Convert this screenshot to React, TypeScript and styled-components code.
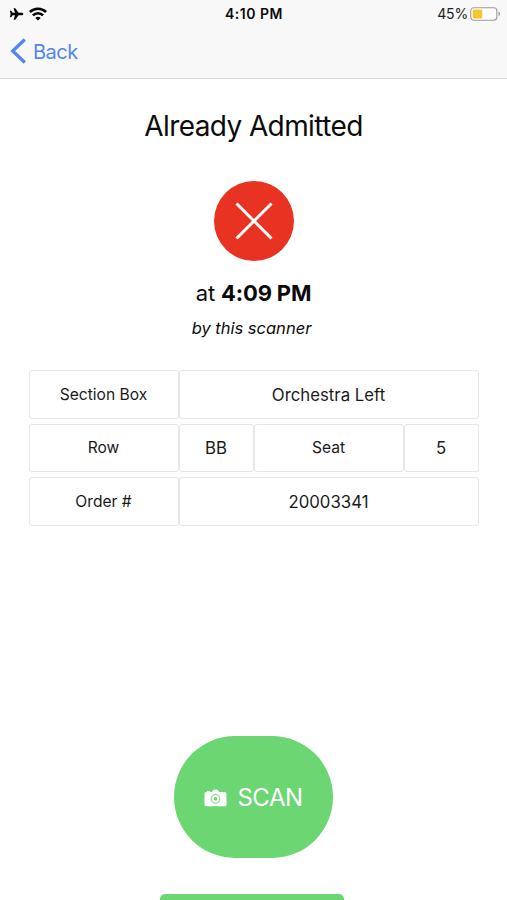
import React from "react";
import styled, { createGlobalStyle } from "styled-components";

const GlobalStyle = createGlobalStyle`
  * { box-sizing: border-box; }
  body {
    margin: 0;
    background: #fff;
    color: #0b0b0b;
    font-family: Inter, "Liberation Sans", sans-serif;
  }
`;

const Screen = styled.div`
  display: flex;
  flex-direction: column;
  width: 507px;
  height: 900px;
  overflow: hidden;
  background: #fff;
`;

const Header = styled.header`
  flex: none;
  height: 79px;
  background: #f8f8f8;
  border-bottom: 1px solid #d9d9d9;
`;

const StatusBar = styled.div`
  display: grid;
  grid-template-columns: 1fr auto 1fr;
  align-items: center;
  height: 27px;
  padding: 0 6px 0 7px;
`;

const StatusIcons = styled.div`
  display: flex;
  align-items: center;
  gap: 5px;
  padding-left: 2px;
`;

const Clock = styled.time`
  font-size: 14px;
  line-height: 27px;
  font-weight: 600;
  letter-spacing: 0.5px;
`;

const BatteryStatus = styled.div`
  display: flex;
  align-items: center;
  justify-content: flex-end;
  gap: 2px;
  font-size: 14px;
  letter-spacing: -0.15px;
  color: #222;
`;

const BackButton = styled.button`
  display: flex;
  align-items: center;
  gap: 6px;
  height: 48px;
  padding: 0 0 0 10px;
  border: 0;
  background: none;
  color: #5486f2;
  font-family: inherit;
  font-size: 20px;
  line-height: 26px;
  letter-spacing: -0.5px;
`;

const BackLabel = styled.span`
  padding-top: 1px;
`;

const Content = styled.main`
  display: flex;
  flex-direction: column;
  align-items: center;
  flex: 1;
  min-height: 0;
`;

const Title = styled.h1`
  margin: 29px 0 0;
  font-size: 28px;
  line-height: 36px;
  font-weight: 400;
  letter-spacing: -0.6px;
`;

const RejectedBadge = styled.div`
  display: flex;
  align-items: center;
  justify-content: center;
  flex: none;
  width: 80px;
  height: 80px;
  margin-top: 37px;
  border-radius: 50%;
  background: #e83323;
`;

const AdmittedTime = styled.p`
  margin: 18px 0 0;
  font-size: 22px;
  line-height: 28px;
  letter-spacing: -0.15px;

  strong { font-weight: 650; }
`;

const ScannerNote = styled.p`
  margin: 9px 0 0;
  padding-right: 4px;
  font-size: 16.5px;
  line-height: 24px;
  font-style: italic;
`;

const Details = styled.div`
  display: flex;
  flex-direction: column;
  flex: none;
  gap: 5px;
  width: 450px;
  margin-top: 30px;
`;

const DetailRow = styled.div`
  display: grid;
  grid-template-columns: 2fr 1fr 2fr 1fr;
  height: 48.7px;
`;

const Cell = styled.div<{ $span?: number; $label?: boolean }>`
  display: flex;
  align-items: center;
  justify-content: center;
  grid-column: span ${({ $span = 1 }) => $span};
  border: 1px solid #e5e7eb;
  border-radius: 3px;
  padding-top: ${({ $label }) => ($label ? 0.8 : 0.6)}px;
  font-size: ${({ $label }) => ($label ? 15.6 : 16.8)}px;
  line-height: 20px;
  color: #1a1a1a;
`;

const ScanButton = styled.button`
  display: flex;
  align-items: center;
  justify-content: center;
  flex: none;
  gap: 10px;
  width: 159px;
  height: 122px;
  margin-top: 210px;
  padding: 1px 0 0;
  border: 0;
  border-radius: 61px;
  background: #6bd672;
  color: #fff;
  font-family: inherit;
  font-size: 24px;
  font-weight: 400;
  letter-spacing: -0.5px;
`;

const BottomButton = styled.div`
  flex: none;
  width: 184px;
  height: 40px;
  margin: 36px 3px 0 0;
  border-radius: 5px;
  background: #6bd672;
`;

const PlaneIcon = () => (
  <svg width="15" height="14" viewBox="0 0 15 14" fill="#050505">
    <path d="M14.3 7c0 .8-.8 1.3-2 1.3H9.6L6.3 12.8H4.5L6 8.3H3.7L2.2 10.2H.9L1.6 7 .9 3.8h1.3l1.5 1.9H6L4.5 1.2h1.8l3.3 4.5h2.7c1.200 0 2 .5 2 1.300z" />
  </svg>
);

const WifiIcon = () => (
  <svg width="18" height="14" viewBox="0 0 18 14" fill="none" stroke="#050505" strokeWidth="2.6">
    <path d="M.9 5a11.6 11.6 0 0 1 16.2 0M3.9 8.4a7.200 7.200 0 0 1 10.200 0" />
    <path d="M6.3 11a3.9 3.9 0 0 1 5.4 0L9 13.600z" fill="#050505" stroke="none" />
  </svg>
);

const BatteryIcon = () => (
  <svg width="31" height="14" viewBox="0 0 31 14">
    <rect x=".8" y=".7" width="26" height="12.6" rx="3" fill="#fff" stroke="#9b9b9b" strokeWidth="1.1" />
    <rect x="2.7" y="2.5" width="9.5" height="9" rx="1" fill="#f2c832" />
    <path d="M28.5 4.6c2 .9 2 3.9 0 4.8z" fill="#9b9b9b" />
  </svg>
);

const BackIcon = () => (
  <svg width="17" height="26" viewBox="0 0 17 26" fill="none" stroke="currentColor" strokeWidth="3.3">
    <path d="M14.8 1.5 2.7 13l12.1 11.5" />
  </svg>
);

const CrossIcon = () => (
  <svg width="40" height="40" viewBox="0 0 40 40" fill="none" stroke="#fff" strokeWidth="3">
    <path d="m2.5 2.5 35 35m0-35-35 35" />
  </svg>
);

const CameraIcon = () => (
  <svg width="23" height="18" viewBox="0 0 23 18">
    <path
      d="M2 3h1V2h3v1h1.6l1.5-1.8Q9.6.5 10.5.5h2q.9 0 1.4.7L15.4 3H21q1.5 0 1.5 1.5v11.3q0 1.5-1.5 1.5H2Q.5 17.3.5 15.8V4.5Q.5 3 2 3z"
      fill="#fff"
    />
    <circle cx="11.5" cy="9.8" r="4.4" fill="none" stroke="#6bd672" strokeWidth="1" />
    <circle cx="11.5" cy="9.8" r="1.8" fill="#6bd672" />
  </svg>
);

export default function App() {
  return (
    <Screen>
      <GlobalStyle />
      <Header>
        <StatusBar>
          <StatusIcons>
            <PlaneIcon />
            <WifiIcon />
          </StatusIcons>
          <Clock>4:10 PM</Clock>
          <BatteryStatus>
            45%
            <BatteryIcon />
          </BatteryStatus>
        </StatusBar>
        <BackButton>
          <BackIcon />
          <BackLabel>Back</BackLabel>
        </BackButton>
      </Header>
      <Content>
        <Title>Already Admitted</Title>
        <RejectedBadge>
          <CrossIcon />
        </RejectedBadge>
        <AdmittedTime>
          at <strong>4:09 PM</strong>
        </AdmittedTime>
        <ScannerNote>by this scanner</ScannerNote>
        <Details>
          <DetailRow>
            <Cell $label>Section Box</Cell>
            <Cell $span={3}>Orchestra Left</Cell>
          </DetailRow>
          <DetailRow>
            <Cell $label>Row</Cell>
            <Cell>BB</Cell>
            <Cell $label>Seat</Cell>
            <Cell>5</Cell>
          </DetailRow>
          <DetailRow>
            <Cell $label>Order #</Cell>
            <Cell $span={3}>20003341</Cell>
          </DetailRow>
        </Details>
        <ScanButton>
          <CameraIcon />
          SCAN
        </ScanButton>
        <BottomButton />
      </Content>
    </Screen>
  );
}
